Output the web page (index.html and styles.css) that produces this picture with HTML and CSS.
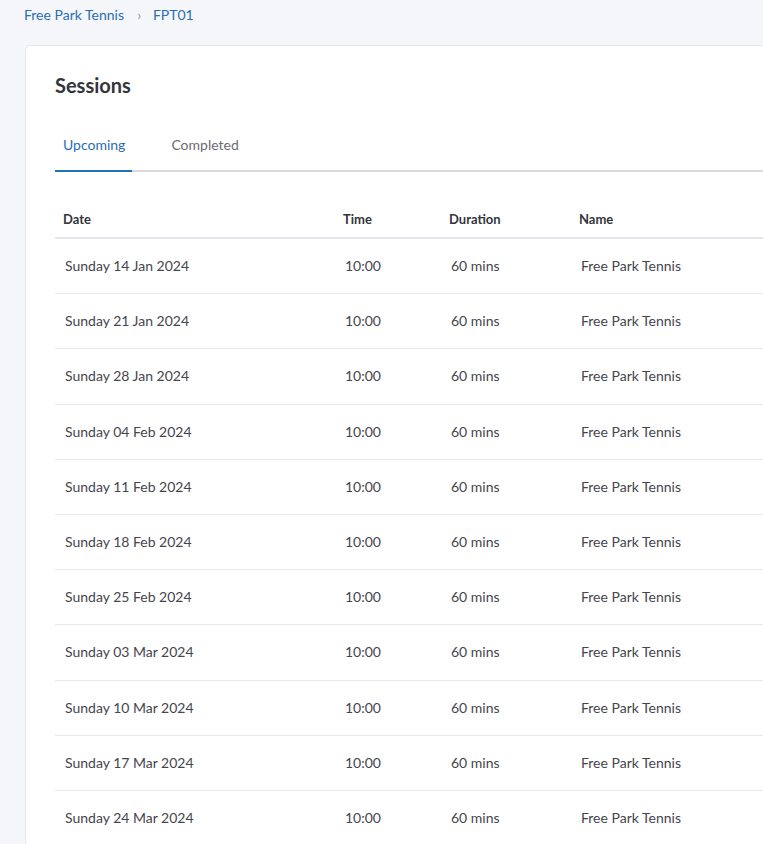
FILE: index.html
```html
<!DOCTYPE html>
<html>
<head>
<meta charset="utf-8">
<link rel="stylesheet" href="styles.css">
</head>
<body>
<nav class="breadcrumb">
  <a class="crumb" href="#">Free Park Tennis</a>
  <span class="sep">›</span>
  <a class="crumb" href="#">FPT01</a>
</nav>
<main class="card">
  <h1 class="title">Sessions</h1>
  <div class="tabs">
    <div class="tab active">Upcoming</div>
    <div class="tab">Completed</div>
  </div>
  <table class="sessions">
    <thead>
      <tr><th class="c-date">Date</th><th class="c-time">Time</th><th class="c-dur">Duration</th><th class="c-name">Name</th></tr>
    </thead>
    <tbody>
      <tr><td>Sunday 14 Jan 2024</td><td>10:00</td><td>60 mins</td><td>Free Park Tennis</td></tr>
      <tr><td>Sunday 21 Jan 2024</td><td>10:00</td><td>60 mins</td><td>Free Park Tennis</td></tr>
      <tr><td>Sunday 28 Jan 2024</td><td>10:00</td><td>60 mins</td><td>Free Park Tennis</td></tr>
      <tr><td>Sunday 04 Feb 2024</td><td>10:00</td><td>60 mins</td><td>Free Park Tennis</td></tr>
      <tr><td>Sunday 11 Feb 2024</td><td>10:00</td><td>60 mins</td><td>Free Park Tennis</td></tr>
      <tr><td>Sunday 18 Feb 2024</td><td>10:00</td><td>60 mins</td><td>Free Park Tennis</td></tr>
      <tr><td>Sunday 25 Feb 2024</td><td>10:00</td><td>60 mins</td><td>Free Park Tennis</td></tr>
      <tr><td>Sunday 03 Mar 2024</td><td>10:00</td><td>60 mins</td><td>Free Park Tennis</td></tr>
      <tr><td>Sunday 10 Mar 2024</td><td>10:00</td><td>60 mins</td><td>Free Park Tennis</td></tr>
      <tr><td>Sunday 17 Mar 2024</td><td>10:00</td><td>60 mins</td><td>Free Park Tennis</td></tr>
      <tr><td>Sunday 24 Mar 2024</td><td>10:00</td><td>60 mins</td><td>Free Park Tennis</td></tr>
    </tbody>
  </table>
</main>
</body>
</html>
```

FILE: styles.css
```css
html { overflow: hidden; }
body {
  margin: 0;
  background: #f5f6fa;
  font-family: Lato, "Noto Sans", sans-serif;
  color: #3d3d47;
  width: 850px;
}
.breadcrumb {
  padding: 5px 0 0 24px;
  height: 40px;
  box-sizing: border-box;
  font-size: 14px;
  line-height: 20px;
}
.crumb { color: #2a6db3; text-decoration: none; }
.sep { color: #8a8d96; margin: 0 8px 0 10px; font-size: 13px; }
.card {
  margin-left: 25px;
  margin-top: 5px;
  background: #fff;
  border: 1px solid #e6e7ec;
  border-radius: 5px;
  padding: 27px 0 0 29px;
  height: 900px;
}
.title {
  margin: 0;
  font-size: 20px;
  line-height: 24px;
  font-weight: 700;
  color: #34343c;
}
.tabs {
  margin-top: 28px;
  display: flex;
  border-bottom: 2px solid #dadbe0;
}
.tab {
  padding: 10px 7px 15px 8px;
  font-size: 14px;
  line-height: 20px;
  color: #6b6b74;
  margin-right: 31px;
  margin-bottom: -2px;
  border-bottom: 2px solid transparent;
}
.tab.active { color: #2a6db3; border-bottom-color: #1f73b7; }
.sessions {
  margin-top: 20px;
  border-collapse: collapse;
  width: 800px;
  font-size: 14px;
  line-height: 20px;
}
.sessions th {
  text-align: left;
  font-weight: 700;
  color: #34343c;
  padding: 17px 8px 8px 8px;
  border-bottom: 2px solid #e6e7ec;
  font-size: 13px;
}
.sessions td {
  padding: 17px 10px;
  line-height: 20.2px;
  border-bottom: 1px solid #e8e9ee;
  color: #45454e;
}
.c-date { width: 264px; }
.c-time { width: 90px; }
.c-dur { width: 114px; }
```
